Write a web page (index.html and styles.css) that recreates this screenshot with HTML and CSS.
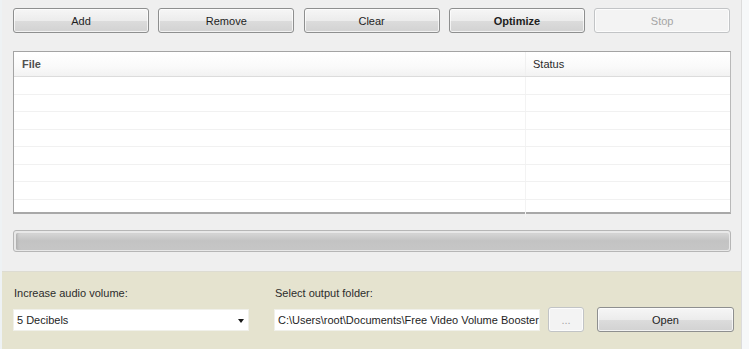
FILE: index.html
```html
<!DOCTYPE html>
<html lang="en">
<head>
    <meta charset="UTF-8">
    <title>Free Video Volume Booster</title>
    <link rel="stylesheet" href="styles.css">
</head>
<body>
    <div class="window">
        <div class="app">
            <div class="toolbar">
                <button class="btn">Add</button>
                <button class="btn">Remove</button>
                <button class="btn">Clear</button>
                <button class="btn btn-bold">Optimize</button>
                <button class="btn" disabled>Stop</button>
            </div>

            <div class="file-list">
                <div class="list-head">
                    <div class="col-file">File</div>
                    <div class="col-status">Status</div>
                </div>
                <div class="list-body">
                    <div class="row"><div class="col-file"></div><div class="col-status"></div></div>
                    <div class="row"><div class="col-file"></div><div class="col-status"></div></div>
                    <div class="row"><div class="col-file"></div><div class="col-status"></div></div>
                    <div class="row"><div class="col-file"></div><div class="col-status"></div></div>
                    <div class="row"><div class="col-file"></div><div class="col-status"></div></div>
                    <div class="row"><div class="col-file"></div><div class="col-status"></div></div>
                    <div class="row"><div class="col-file"></div><div class="col-status"></div></div>
                    <div class="row last"><div class="col-file"></div><div class="col-status"></div></div>
                </div>
            </div>

            <div class="progress">
                <div class="progress-fill"></div>
            </div>

            <div class="options">
                <label class="opt-label">Increase audio volume:</label>
                <label class="opt-label label-folder">Select output folder:</label>
                <div class="opt-spacer"></div>
                <div class="opt-spacer"></div>

                <div class="combo">
                    <span>5 Decibels</span>
                    <span class="combo-arrow"></span>
                </div>
                <div class="textbox">C:\Users\root\Documents\Free Video Volume Booster</div>
                <button class="btn btn-small" disabled>...</button>
                <button class="btn btn-open">Open</button>
            </div>
        </div>
        <div class="edge"></div>
    </div>
</body>
</html>
```

FILE: styles.css
```css
body {
    margin: 0;
    background: #efefef;
    font-family: Tahoma, "Liberation Sans", Arial, sans-serif;
    font-size: 11px;
    color: #1e1e1e;
}

.window {
    display: flex;
    height: 349px;
    overflow: hidden;
}

.app {
    width: 741px;
    display: flex;
    flex-direction: column;
    border-left: 2px solid #eef2f4;
    box-sizing: border-box;
}

.edge {
    flex: 1;
    background: #f6f8f9;
    border-left: 1px solid #dcdcdc;
}

/* buttons */
.btn {
    font-family: inherit;
    font-size: 11px;
    color: #1e1e1e;
    height: 25px;
    border: 1px solid #8e8f8f;
    border-radius: 3px;
    background: linear-gradient(#f6f6f6 0%, #ececec 50%, #dcdcdc 51%, #d2d2d2 100%);
    box-shadow: inset 0 0 0 1px rgba(255, 255, 255, 0.7);
    padding: 0;
}

.btn-bold {
    font-weight: bold;
}

.btn:disabled {
    color: #a5a5a5;
    border-color: #c2c4c6;
    background: #f3f3f3;
}

.toolbar {
    display: grid;
    grid-template-columns: repeat(5, 136px);
    column-gap: 9.3px;
    margin: 8px 0 0 11px;
}

/* file list */
.file-list {
    margin: 18px 0 0 11px;
    width: 718px;
    height: 163px;
    box-sizing: border-box;
    background: #fff;
    border: 1px solid #a3a3a3;
    border-right-color: #b9b9b9;
    border-bottom: 2px solid #a8a8a8;
}

.list-head {
    display: flex;
    height: 24px;
    align-items: center;
    border-bottom: 1px solid #dcdcdc;
    background: linear-gradient(#ffffff 0%, #fafafa 60%, #f2f2f2 100%);
    color: #2a2a2a;
}

.col-file {
    width: 511px;
    padding-left: 8px;
    box-sizing: border-box;
}

.col-status {
    flex: 1;
    padding-left: 7px;
}

.list-head .col-file {
    font-weight: bold;
    color: #505050;
}

.list-head .col-status {
    border-left: 1px solid #f0f0f0;
    line-height: 24px;
}

.list-body .col-status {
    border-left: 1px solid #f3f3f3;
    height: 100%;
}

.row {
    display: flex;
    height: 17.5px;
    border-bottom: 1px solid #f1f1f1;
    box-sizing: border-box;
}

.row.last {
    border-bottom: none;
}

/* progress */
.progress {
    margin: 16px 0 0 11px;
    width: 718px;
    height: 22px;
    box-sizing: border-box;
    border: 1px solid #b6b6b6;
    border-radius: 3px;
    background: #e8e8e8;
    padding: 2px 1px 1px 2px;
}

.progress-fill {
    height: 100%;
    border-radius: 2px;
    background: linear-gradient(#d6d6d6 0%, #c3c3c3 45%, #c6c6c6 100%);
    box-shadow: inset 3px 0 3px -2px #a9a9a9;
}

/* options panel */
.options {
    margin-top: 19px;
    flex: 1;
    background: #e5e3cf;
    border-top: 1px solid #dddcd2;
    display: grid;
    grid-template-columns: 236px 266px 36px 137px;
    grid-template-rows: 20px 25px;
    padding: 15px 0 0 11px;
    align-items: center;
}

.opt-label {
    color: #2c2c2c;
    padding-left: 1px;
    align-self: start;
}

.label-folder {
    margin-left: 25px;
}

.combo {
    height: 22px;
    box-sizing: border-box;
    background: #fff;
    border: 1px solid #f0f0ea;
    display: flex;
    align-items: center;
    justify-content: space-between;
    padding: 0 4px 0 3px;
}

.combo-arrow {
    width: 0;
    height: 0;
    border-left: 3.5px solid transparent;
    border-right: 3.5px solid transparent;
    border-top: 4px solid #1a1a1a;
    margin-top: 3px;
}

.textbox {
    height: 22px;
    line-height: 20px;
    box-sizing: border-box;
    background: #fff;
    border: 1px solid #f0f0ea;
    margin-left: 25px;
    padding-left: 3px;
    white-space: nowrap;
    overflow: hidden;
    width: 266px;
}

.btn-small {
    margin-left: 33px;
    width: 36px;
}

.btn-open {
    margin-left: 46px;
    width: 137px;
}
```
